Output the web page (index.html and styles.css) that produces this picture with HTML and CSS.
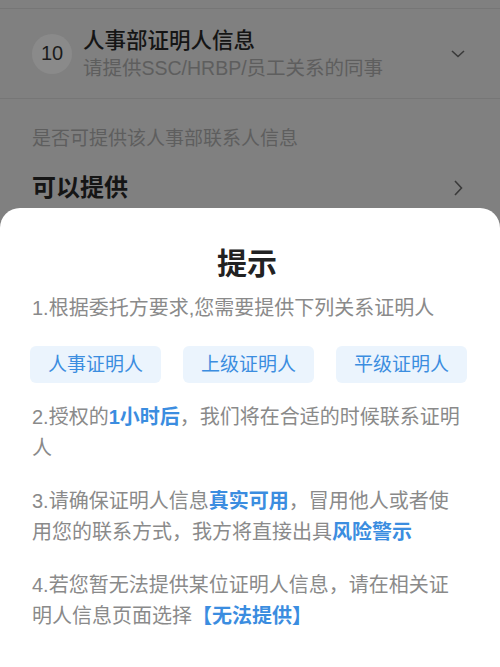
FILE: index.html
```html
<!DOCTYPE html>
<html lang="zh-CN">
<head>
  <meta charset="UTF-8" />
  <meta name="viewport" content="width=device-width, initial-scale=1.0"/>
  <title>提示</title>
  <link rel="stylesheet" href="styles.css">
</head>
<body>

  <div class="page">
    <div class="step-head">
      <div class="step-num">10</div>
      <div class="step-text">
        <div class="step-title">人事部证明人信息</div>
        <div class="step-sub">请提供SSC/HRBP/员工关系的同事</div>
      </div>
      <svg class="chev-down" width="14" height="8" viewBox="0 0 14 8">
        <path d="M1 1l6 5.5L13 1" fill="none" stroke="#3a3a3a" stroke-width="1.6"/>
      </svg>
    </div>

    <div class="field">
      <div class="field-label">是否可提供该人事部联系人信息</div>
      <div class="field-row">
        <span class="field-value">可以提供</span>
        <svg class="chev-right" width="9" height="16" viewBox="0 0 9 16">
          <path d="M1 1l6.5 7L1 15" fill="none" stroke="#3a3a3a" stroke-width="1.6"/>
        </svg>
      </div>
    </div>
  </div>

  <div class="modal">
    <h2>提示</h2>
    <p>1.根据委托方要求,您需要提供下列关系证明人</p>
    <div class="tags">
      <span class="tag">人事证明人</span>
      <span class="tag">上级证明人</span>
      <span class="tag">平级证明人</span>
    </div>
    <p>2.授权的<b>1小时后</b>，我们将在合适的时候联系证明人</p>
    <p>3.请确保证明人信息<b>真实可用</b>，冒用他人或者使用您的联系方式，我方将直接出具<b>风险警示</b></p>
    <p>4.若您暂无法提供某位证明人信息，请在相关证明人信息页面选择<b>【无法提供】</b></p>
  </div>

</body>
</html>
```

FILE: styles.css
```css
body {
  margin: 0;
  padding: 0;
  width: 500px;
  height: 667px;
  overflow: hidden;
  position: relative;
  background: #808080;
  font-family: "Liberation Sans", "Noto Sans CJK SC", sans-serif;
}

.page {
  padding-top: 8px;
}

.step-head {
  display: flex;
  align-items: center;
  height: 89px;
  padding: 0 32px;
  border-top: 1px solid #767676;
  border-bottom: 1px solid #767676;
}

.step-num {
  width: 40px;
  height: 40px;
  border-radius: 50%;
  background: #8a8a8a;
  color: #1c1c1c;
  font-size: 20px;
  display: flex;
  align-items: center;
  justify-content: center;
  flex-shrink: 0;
}

.step-text {
  margin-left: 11px;
  flex: 1;
}

.step-title {
  font-size: 21.5px;
  font-weight: 500;
  color: #151515;
  line-height: 28px;
}

.step-sub {
  font-size: 19.5px;
  color: #5e5e5e;
  line-height: 26px;
}

.chev-down {
  margin-right: 3px;
}

.field {
  padding: 26px 32px 0;
}

.field-label {
  font-size: 19px;
  color: #5e5e5e;
  line-height: 28px;
}

.field-row {
  display: flex;
  align-items: center;
  justify-content: space-between;
  margin-top: 18px;
}

.field-value {
  font-size: 24px;
  font-weight: 700;
  color: #151515;
  line-height: 34px;
}

.chev-right {
  margin-right: 5px;
}

.modal {
  position: absolute;
  left: 0;
  right: 0;
  top: 208px;
  bottom: 0;
  background: #fff;
  border-radius: 20px 20px 0 0;
  padding: 36px 38px 0 32px;
}

h2 {
  margin: 0 0 9px;
  text-align: center;
  font-size: 30px;
  line-height: 40px;
  font-weight: 700;
  color: #222;
}

p {
  margin: 0 0 22px;
  font-size: 20px;
  line-height: 31px;
  color: #8a8a8a;
}

p b {
  color: #3b8de0;
  font-weight: 700;
}

.tags {
  display: flex;
  gap: 22px;
  margin: 22px -8px 19px -2px;
}

.tag {
  flex: none;
  width: 131px;
  height: 37px;
  line-height: 37px;
  text-align: center;
  border-radius: 6px;
  background: #ebf4fd;
  color: #3b8de0;
  font-size: 19px;
}
```
